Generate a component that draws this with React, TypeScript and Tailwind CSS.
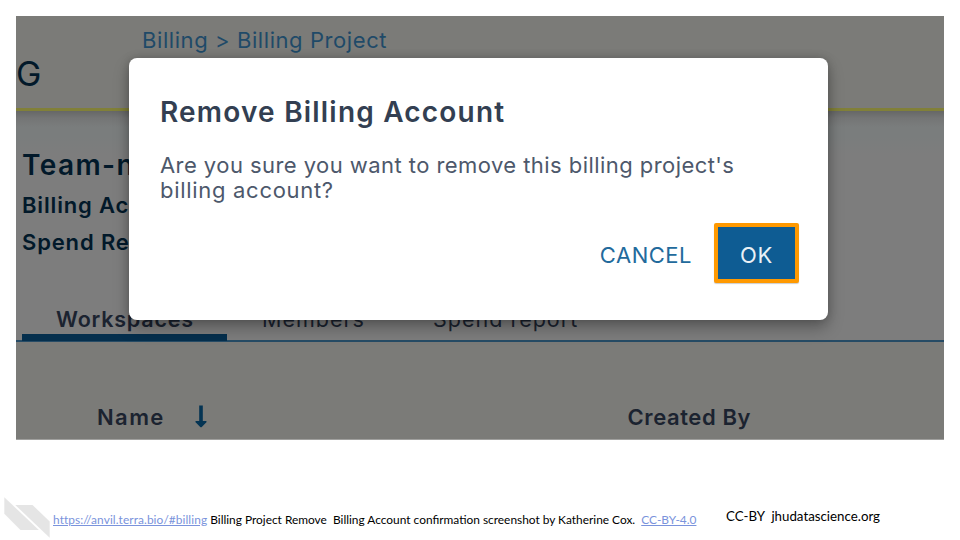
import React from "react";

function Backdrop() {
  return (
    <div className="flex h-[423.5px] w-[928px] flex-col overflow-hidden bg-[#7d7d7d] whitespace-nowrap text-[#1b2330]">
      <header className="flex h-[94.5px] shrink-0 flex-col border-b-[3px] border-[#818038] bg-[#7b7b78]">
        <div className="flex h-12 items-center pl-[126px] text-[22px] tracking-[0.58px] text-[#1f4a68]">
          Billing &gt; Billing Project
        </div>
        <div className="flex h-[19px] items-center text-[34px] text-[#02192a]">G</div>
      </header>
      <section className="flex shrink-0 flex-col bg-[linear-gradient(to_bottom,#666766_0px,#747575_7px,#7a7d7d_16px,#7a7d7d_26px,#7d7d7d_44px)] pt-[37.5px] pl-1.5 text-[#02192a]">
        <h1 className="flex h-[33px] items-center text-[28px] font-semibold tracking-[1.4px]">Team-n</h1>
        <div className="mt-[5px] flex h-[38px] items-center text-[22px] font-semibold tracking-[0.85px]">Billing Ac</div>
        <div className="flex h-[37px] items-center text-[22px] font-semibold tracking-[0.85px]">Spend Re</div>
      </section>
      <nav className="mt-[43px] flex h-[38px] shrink-0 items-start border-b-2 border-[#264b65] pl-1.5 text-[21.5px]">
        <div className="flex h-[37px] w-[205px] flex-col border-b-[7px] border-[#052f4d] font-semibold">
          <span className="flex h-[31px] items-center pl-[34px] tracking-[0.8px] text-[#1b2330]">Workspaces</span>
        </div>
        <span className="ml-[35px] flex h-[31px] w-[171px] items-center tracking-[1px]">Members</span>
        <span className="flex h-[31px] items-center tracking-[1px]">Spend report</span>
      </nav>
      <div className="flex flex-1 items-start border-b border-[#a0a09e] bg-[#7b7b78] pt-[60px] pl-[81px] text-[22px] font-semibold">
        <span className="flex h-[31px] w-[98px] items-center tracking-[1.4px]">Name</span>
        <svg className="mt-[3px] h-[23px] w-3" viewBox="0 0 12 23" fill="#043453">
          <path d="M4.2 .5h3.6v15.5h3c.9 0 1.1.8.6 1.3l-4.6 4.6c-.5.5-1.1.5-1.6 0L.6 17.3c-.5-.5-.3-1.3.6-1.3h3z" />
        </svg>
        <span className="ml-[420.5px] flex h-[31px] items-center tracking-[0.6px]">Created By</span>
      </div>
    </div>
  );
}

function Dialog() {
  return (
    <div className="absolute top-[58px] left-[129px] z-10 flex h-[262px] w-[698.5px] flex-col rounded-[8px] bg-white pr-[28.5px] pl-[31px] whitespace-nowrap shadow-[0_8px_16px_rgba(0,0,0,0.28),0_0_10px_rgba(0,0,0,0.18)]">
      <h2 className="mt-9 flex h-9 items-center text-[28px] font-semibold tracking-[1.2px] text-[#333f52]">
        Remove Billing Account
      </h2>
      <p className="mt-[23px] text-[22px] leading-[24.5px] text-[#4d586b]">
        <span className="tracking-[0.44px]">Are you sure you want to remove this billing project's</span>
        <br />
        <span className="tracking-[0.7px]">billing account?</span>
      </p>
      <div className="mt-[21px] flex items-center justify-end text-[22px]">
        <button className="mr-[22px] pt-[5px] tracking-[0.5px] text-[#226a9c]">CANCEL</button>
        <button className="h-[60px] w-[85px] rounded-[2px] border-4 border-[#ff9900] bg-[#0e5c93] pt-[5px] tracking-[0.8px] text-[#eaf1f6] shadow-[0_1px_1px_rgba(0,0,0,0.2)]">
          OK
        </button>
      </div>
    </div>
  );
}

export default function App() {
  return (
    <div className="relative flex h-[540px] w-[960px] flex-col overflow-hidden bg-white pt-4 font-['Inter',sans-serif]">
      <div className="pl-4">
        <Backdrop />
      </div>
      <Dialog />
      <footer className="mt-[57px] flex items-start pl-1 font-['Lato',sans-serif] whitespace-pre text-black">
        <svg className="h-[41px] w-[46px]" viewBox="0 0 46 41" fill="#e5e5e5">
          <path d="M.3 .2 34.8 33H16.5L.3 16.8z" />
          <path d="M11.3 8H28.5L45.7 24.5V40.8z" />
        </svg>
        <p className="mt-[15px] ml-[3px] w-[673px] text-[11.9px] leading-4">
          <a className="tracking-[0.08px] text-[#7a93dc] underline">https://anvil.terra.bio/#billing</a>
          {" Billing Project Remove  Billing Account confirmation screenshot by Katherine Cox.  "}
          <a className="text-[#7a93dc] underline">CC-BY-4.0</a>
        </p>
        <p className="mt-[11.5px] text-[13.3px] leading-4">{"CC-BY  jhudatascience.org"}</p>
      </footer>
    </div>
  );
}
